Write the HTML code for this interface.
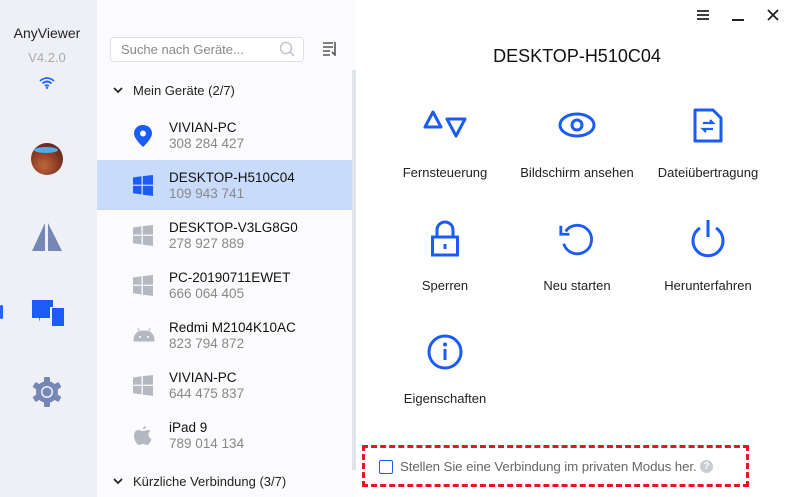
<!DOCTYPE html>
<html><head><meta charset="utf-8"><style>
*{margin:0;padding:0;box-sizing:border-box}
body{width:797px;height:497px;overflow:hidden;font-family:"Liberation Sans",sans-serif;background:#fff;position:relative}
.abs{position:absolute}
#side{left:0;top:0;width:97px;height:497px;background:#eef0f5}
#mid{left:97px;top:0;width:259px;height:497px;background:#fbfbfd}
.row{position:absolute;left:97px;width:255px;height:50px}
.row .n{position:absolute;left:72px;top:10px;font-size:13.5px;color:#111}
.row .i{position:absolute;left:72px;top:26px;font-size:13.5px;color:#888}
.row svg{position:absolute;left:36px;top:15px}
.act{position:absolute;width:130px;text-align:center;font-size:13px;color:#222}
.act svg{display:block;margin:0 auto}
</style></head><body>
<div id="side" class="abs"></div>
<div class="abs" style="left:0;top:25px;width:94px;text-align:center;font-size:14px;color:#222">AnyViewer</div>
<div class="abs" style="left:0;top:50px;width:94px;text-align:center;font-size:13px;color:#aaa">V4.2.0</div>
<svg class="abs" style="left:39px;top:77px" width="16" height="12" viewBox="0 0 16 12"><path d="M1 4Q8-2 15 4M3.5 6.5Q8 2.5 12.5 6.5M6 9Q8 7.5 10 9" stroke="#1a66ff" stroke-width="1.8" fill="none"/><circle cx="8" cy="10.8" r="1.2" fill="#1a66ff"/></svg>
<div class="abs" style="left:31px;top:143px;width:32px;height:32px;border-radius:50%;background:radial-gradient(circle at 40% 70%,#c2663a,#7a3020 60%,#4a2030);overflow:hidden"><div style="position:absolute;left:3px;top:4px;width:24px;height:6px;background:#4ab0e8;border-radius:50%"></div></div>
<svg class="abs" style="left:31px;top:223px" width="32" height="28" viewBox="0 0 32 28"><path d="M14 0L14 28L1 28Z M17 0L17 28L31 28Z" fill="#7587b4"/></svg>
<div class="abs" style="left:0;top:305px;width:3px;height:14px;background:#1a66ff;border-radius:2px"></div>
<svg class="abs" style="left:32px;top:300px" width="32" height="28" viewBox="0 0 32 28"><path d="M0 0H21V7H18V18H8L7 22H7V18H0Z" fill="#1a5cf5"/><rect x="20" y="8" width="12" height="18" fill="#1a5cf5"/></svg>
<svg class="abs" style="left:31px;top:376px" width="32" height="32" viewBox="0 0 32 32"><g fill="#7587b4"><circle cx="16" cy="16" r="11"/><g id="t"><rect x="13" y="1" width="6" height="30" rx="1"/></g><use href="#t" transform="rotate(60 16 16)"/><use href="#t" transform="rotate(120 16 16)"/></g><circle cx="16" cy="16" r="6" fill="#eef0f5"/><circle cx="16" cy="16" r="4.5" fill="#7587b4"/></svg>

<div id="mid" class="abs"></div>
<div class="abs" style="left:110px;top:37px;width:194px;height:25px;border:1px solid #dde0e6;border-radius:4px;background:#fff;font-size:13px;color:#888;padding:4px 0 0 10px">Suche nach Geräte...</div>
<svg class="abs" style="left:279px;top:41px" width="16" height="16" viewBox="0 0 16 16"><circle cx="7" cy="7" r="5.5" stroke="#c4c8d0" stroke-width="1.6" fill="none"/><path d="M11 11L15 15" stroke="#c4c8d0" stroke-width="1.8"/></svg>
<svg class="abs" style="left:323px;top:42px" width="15" height="14" viewBox="0 0 15 14"><path d="M0 1H10M0 5H10M0 9H7M0 13H7M12 0V13L9 10" stroke="#555" stroke-width="1.6" fill="none"/></svg>
<div class="abs" style="left:352px;top:70px;width:4px;height:400px;background:#e0e3ea"></div>
<svg class="abs" style="left:113px;top:86px" width="10" height="8" viewBox="0 0 10 8"><path d="M1 2L5 6L9 2" stroke="#222" stroke-width="1.7" fill="none"/></svg>
<div class="abs" style="left:133px;top:83px;font-size:13px;color:#222">Mein Geräte (2/7)</div>

<div class="row" style="top:110px"><svg width="20" height="22" viewBox="0 0 20 22"><path d="M10 0C4.5 0 1 4 1 8.5C1 14 10 22 10 22S19 14 19 8.5C19 4 15.5 0 10 0Z" fill="#1a5cf5"/><circle cx="10" cy="8.5" r="3" fill="#fbfbfd"/></svg><div class="n">VIVIAN-PC</div><div class="i">308 284 427</div></div>
<div class="row" style="top:160px;background:#c9dbfb"><svg width="20" height="21" viewBox="0 0 20 21"><path d="M0 2.5L8.5 1.3V9.6H0ZM9.8 1.1L20 0V9.6H9.8ZM0 10.9H8.5V19.4L0 18.3ZM9.8 10.9H20V21L9.8 19.6Z" fill="#1a5cf5"/></svg><div class="n">DESKTOP-H510C04</div><div class="i">109 943 741</div></div>
<div class="row" style="top:210px"><svg width="20" height="21" viewBox="0 0 20 21"><path d="M0 2.5L8.5 1.3V9.6H0ZM9.8 1.1L20 0V9.6H9.8ZM0 10.9H8.5V19.4L0 18.3ZM9.8 10.9H20V21L9.8 19.6Z" fill="#b4b8c0"/></svg><div class="n">DESKTOP-V3LG8G0</div><div class="i">278 927 889</div></div>
<div class="row" style="top:260px"><svg width="20" height="21" viewBox="0 0 20 21"><path d="M0 2.5L8.5 1.3V9.6H0ZM9.8 1.1L20 0V9.6H9.8ZM0 10.9H8.5V19.4L0 18.3ZM9.8 10.9H20V21L9.8 19.6Z" fill="#b4b8c0"/></svg><div class="n">PC-20190711EWET</div><div class="i">666 064 405</div></div>
<div class="row" style="top:310px"><svg width="22" height="16" viewBox="0 0 22 16" style="top:17px"><path d="M1 14Q1 4 11 4Q21 4 21 14Z M5 1L7 5M17 1L15 5" fill="#b4b8c0" stroke="#b4b8c0" stroke-width="1"/><circle cx="7" cy="10" r="1" fill="#fff"/><circle cx="15" cy="10" r="1" fill="#fff"/></svg><div class="n">Redmi M2104K10AC</div><div class="i">823 794 872</div></div>
<div class="row" style="top:360px"><svg width="20" height="21" viewBox="0 0 20 21"><path d="M0 2.5L8.5 1.3V9.6H0ZM9.8 1.1L20 0V9.6H9.8ZM0 10.9H8.5V19.4L0 18.3ZM9.8 10.9H20V21L9.8 19.6Z" fill="#b4b8c0"/></svg><div class="n">VIVIAN-PC</div><div class="i">644 475 837</div></div>
<div class="row" style="top:410px"><svg width="18" height="22" viewBox="0 0 18 22" style="left:37px"><path d="M9 6C7 6 6 5 4.5 5C2 5 0 7 0 10.5C0 15 3 20 5 20C6.5 20 7 19 9 19C11 19 11.5 20 13 20C15 20 17 16 17.5 14C15.5 13 14.5 11.5 14.5 9.5C14.5 8 15.5 6.5 16.5 6C15.5 5 14.5 5 13.5 5C12 5 11 6 9 6Z M9 4.5C9 2.5 10.5 1 12 1C12 3 10.5 4.5 9 4.5Z" fill="#b4b8c0"/></svg><div class="n">iPad 9</div><div class="i">789 014 134</div></div>
<svg class="abs" style="left:113px;top:477px" width="10" height="8" viewBox="0 0 10 8"><path d="M1 2L5 6L9 2" stroke="#222" stroke-width="1.7" fill="none"/></svg>
<div class="abs" style="left:133px;top:474px;font-size:13px;color:#222">Kürzliche Verbindung (3/7)</div>

<svg class="abs" style="left:697px;top:10px" width="12" height="10" viewBox="0 0 12 10"><path d="M0 1H12M0 5H12M0 9H12" stroke="#222" stroke-width="1.8"/></svg>
<div class="abs" style="left:732px;top:19px;width:12px;height:2px;background:#222"></div>
<svg class="abs" style="left:767px;top:9px" width="12" height="12" viewBox="0 0 12 12"><path d="M1 1L11 11M11 1L1 11" stroke="#222" stroke-width="1.8"/></svg>

<div class="abs" style="left:357px;top:46px;width:440px;text-align:center;font-size:18px;color:#111">DESKTOP-H510C04</div>

<div class="act" style="left:380px;top:110px"><svg width="44" height="30" viewBox="0 0 44 30"><path d="M10 2L2 17H18Z M24 9H42L33 26Z" stroke="#1a5cf5" stroke-width="3" fill="none" stroke-linejoin="round"/></svg><div style="margin-top:25px">Fernsteuerung</div></div>
<div class="act" style="left:512px;top:110px"><svg width="40" height="30" viewBox="0 0 40 30"><ellipse cx="20" cy="15" rx="17" ry="11" stroke="#1a5cf5" stroke-width="3" fill="none"/><circle cx="20" cy="15" r="5" stroke="#1a5cf5" stroke-width="3" fill="none"/></svg><div style="margin-top:25px">Bildschirm ansehen</div></div>
<div class="act" style="left:643px;top:108px"><svg width="32" height="36" viewBox="0 0 32 36"><path d="M3 2H21L29 10V33H3Z" stroke="#1a5cf5" stroke-width="3" fill="none" stroke-linejoin="round"/><path d="M11 15H21L18 12M21 21H11L14 24" stroke="#1a5cf5" stroke-width="2.2" fill="none"/></svg><div style="margin-top:21px">Dateiübertragung</div></div>

<div class="act" style="left:380px;top:220px"><svg width="34" height="38" viewBox="0 0 34 38"><path d="M9 17V10A8 8 0 0 1 25 10V17" stroke="#1a5cf5" stroke-width="3" fill="none"/><rect x="4.5" y="17" width="25" height="18" stroke="#1a5cf5" stroke-width="3" fill="none"/><rect x="15.5" y="24" width="3" height="5" fill="#1a5cf5"/></svg><div style="margin-top:20px">Sperren</div></div>
<div class="act" style="left:512px;top:220px"><svg width="40" height="38" viewBox="0 0 40 40"><path d="M8 12A15 15 0 1 1 6 25" stroke="#1a5cf5" stroke-width="3" fill="none"/><path d="M3 6V15H12" stroke="#1a5cf5" stroke-width="3" fill="none"/></svg><div style="margin-top:20px">Neu starten</div></div>
<div class="act" style="left:643px;top:218px"><svg width="40" height="42" viewBox="0 0 40 42"><path d="M12 10A15 15 0 1 0 28 10" stroke="#1a5cf5" stroke-width="3" fill="none"/><path d="M20 2V19" stroke="#1a5cf5" stroke-width="3"/></svg><div style="margin-top:18px">Herunterfahren</div></div>

<div class="act" style="left:380px;top:332px"><svg width="40" height="40" viewBox="0 0 40 40"><circle cx="20" cy="20" r="16" stroke="#1a5cf5" stroke-width="3" fill="none"/><circle cx="20" cy="12.5" r="2" fill="#1a5cf5"/><rect x="18.5" y="17" width="3" height="11" fill="#1a5cf5"/></svg><div style="margin-top:19px">Eigenschaften</div></div>

<div class="abs" style="left:362px;top:445px;width:387px;height:42px;border:3px dashed #e8141e"></div>
<div class="abs" style="left:379px;top:460px;width:14px;height:14px;border:1.5px solid #1a5cf5;border-radius:2px;background:#fff"></div>
<div class="abs" style="left:400px;top:459px;font-size:13.3px;color:#666;letter-spacing:-0.1px">Stellen Sie eine Verbindung im privaten Modus her.</div>
<div class="abs" style="left:700px;top:460px;width:13px;height:13px;border-radius:50%;background:#c8ccd4;color:#fff;font-size:10px;text-align:center;line-height:13px;font-weight:bold">?</div>
</body></html>
